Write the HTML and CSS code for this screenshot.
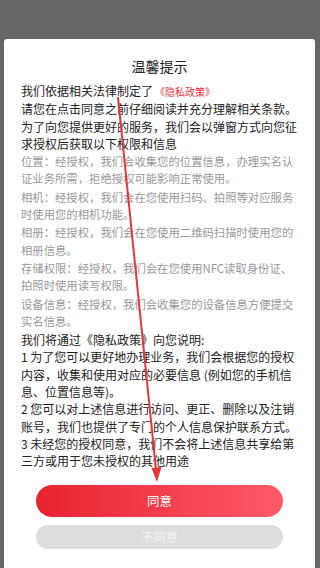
FILE: index.html
```html
<!DOCTYPE html>
<html lang="zh-CN">
<head>
    <meta charset="UTF-8">
    <meta name="viewport" content="width=device-width, initial-scale=1.0">
    <title>温馨提示</title>
    <link rel="stylesheet" href="styles.css">
</head>
<body>
    <div class="dialog">
        <div class="dialog-title">温馨提示</div>
        <div class="dialog-body">
            <p class="text-main">我们依据相关法律制定了<span class="policy-link">《隐私政策》</span><br>请您在点击同意之前仔细阅读并充分理解相关条款。为了向您提供更好的服务，我们会以弹窗方式向您征求授权后获取以下权限和信息</p>
            <p class="text-sub">位置：经授权，我们会收集您的位置信息，办理实名认证业务所需，拒绝授权可能影响正常使用。</p>
            <p class="text-sub">相机：经授权，我们会在您使用扫码、拍照等对应服务时使用您的相机功能。</p>
            <p class="text-sub">相册：经授权，我们会在您使用二维码扫描时使用您的相册信息。</p>
            <p class="text-sub">存储权限：经授权，我们会在您使用NFC读取身份证、拍照时使用读写权限。</p>
            <p class="text-sub">设备信息：经授权，我们会收集您的设备信息方便提交实名信息。</p>
            <p class="text-main">我们将通过《隐私政策》向您说明:<br>1 为了您可以更好地办理业务，我们会根据您的授权内容，收集和使用对应的必要信息 (例如您的手机信息、位置信息等)。<br>2 您可以对上述信息进行访问、更正、删除以及注销账号，我们也提供了专门的个人信息保护联系方式。<br>3 未经您的授权同意，我们不会将上述信息共享给第三方或用于您未授权的其他用途</p>
        </div>
        <div class="dialog-actions">
            <button class="btn btn-agree">同意</button>
            <button class="btn btn-refuse">不同意</button>
        </div>
    </div>

    <!-- 标注箭头 -->
    <svg class="mark-arrow" width="320" height="568" viewBox="0 0 320 568">
        <line x1="118" y1="97" x2="156" y2="470" stroke="#e8353d" stroke-width="2"/>
        <polygon points="151.5,468 161.5,467 157,482" fill="#e8353d"/>
    </svg>
</body>
</html>
```

FILE: styles.css
```css
body {
    margin: 0;
    height: 568px;
    overflow: hidden;
    background-color: #666666;
    font-family: "Noto Sans CJK SC", "Noto Sans", sans-serif;
    position: relative;
}

.dialog {
    margin: 39px 5px 0 4px;
    height: 529px;
    background-color: #fff;
    border-radius: 3px 3px 0 0;
    padding: 17px 17px 0 17px;
    box-sizing: border-box;
}

.dialog-title {
    text-align: center;
    font-size: 14px;
    line-height: 20px;
    color: #222;
    margin-bottom: 6px;
}

.dialog-body p {
    margin: 0;
    line-break: strict;
}

.text-main {
    font-size: 12px;
    line-height: 17.3px;
    color: #222;
}

.text-sub {
    font-size: 11.35px;
    line-height: 17.3px;
    color: #999;
    margin-top: 1px !important;
}

.text-sub + .text-main {
    margin-top: 1px !important;
}

.policy-link {
    font-size: 10px;
    color: #e8333f;
    margin-left: 2px;
}

.dialog-actions {
    display: flex;
    flex-direction: column;
    align-items: center;
    gap: 8px;
    margin-top: 15px;
}

.btn {
    border: none;
    border-radius: 16px;
    width: 247px;
    font-family: inherit;
    padding: 0;
    color: #fff;
}

.btn-agree {
    height: 32px;
    font-size: 12.5px;
    background: linear-gradient(to right, #e8222f, #ff5a69);
}

.btn-refuse {
    height: 24px;
    border-radius: 12px;
    font-size: 12.2px;
    background-color: #dddddd;
    color: #f6f6f6;
}

.mark-arrow {
    position: absolute;
    left: 0;
    top: 0;
    pointer-events: none;
}
```
